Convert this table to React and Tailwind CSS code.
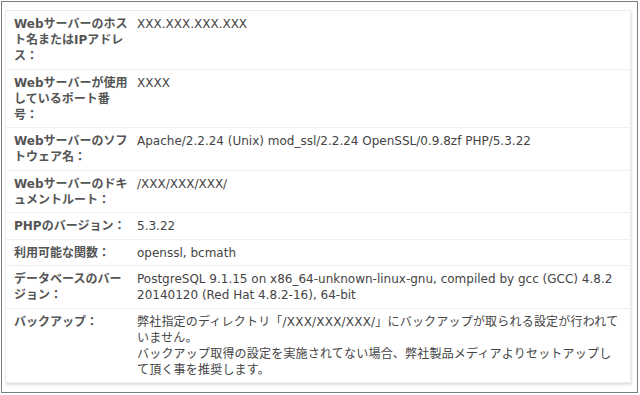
export default function App() {
  const rows = [
    ["Webサーバーのホスト名またはIPアドレス：", "XXX.XXX.XXX.XXX"],
    ["Webサーバーが使用しているポート番号：", "XXXX"],
    ["Webサーバーのソフトウェア名：", "Apache/2.2.24 (Unix) mod_ssl/2.2.24 OpenSSL/0.9.8zf PHP/5.3.22"],
    ["Webサーバーのドキュメントルート：", "/XXX/XXX/XXX/"],
    ["PHPのバージョン：", "5.3.22"],
    ["利用可能な関数：", "openssl, bcmath"],
    ["データベースのバージョン：", "PostgreSQL 9.1.15 on x86_64-unknown-linux-gnu, compiled by gcc (GCC) 4.8.2 20140120 (Red Hat 4.8.2-16), 64-bit"],
    [
      "バックアップ：",
      <span className="tracking-[0.2px]">
        弊社指定のディレクトリ「/XXX/XXX/XXX/」にバックアップが取られる設定が行われて
        <br />
        いません。
        <br />
        バックアップ取得の設定を実施されてない場合、弊社製品メディアよりセットアップし
        <br />
        て頂く事を推奨します。
      </span>,
    ],
  ];
  return (
    <div
      className="w-[640px] h-[395px] bg-white"
      style={{ fontFamily: '"DejaVu Sans", "Noto Sans CJK JP", sans-serif' }}
    >
      <div className="ml-px mt-px w-[637px] h-[392px] border border-[#7d7d7d] pt-2 pl-[3px]">
        <div className="w-[626px] border border-[#ececec] shadow-[1px_2px_2px_rgba(0,0,0,0.12)] text-[12px] leading-4">
          {rows.map(([label, value], i) => (
            <div key={i} className={"flex " + (i > 0 ? "border-t border-[#efefef]" : "")}>
              <div className="w-[123px] shrink-0 pl-2 pt-[5px] pb-[4.5px] font-bold text-[#555555]">{label}</div>
              <div className="flex-1 pl-2 pr-[8px] pt-[5px] pb-[4.5px] text-[#444444]">{value}</div>
            </div>
          ))}
        </div>
      </div>
    </div>
  );
}
